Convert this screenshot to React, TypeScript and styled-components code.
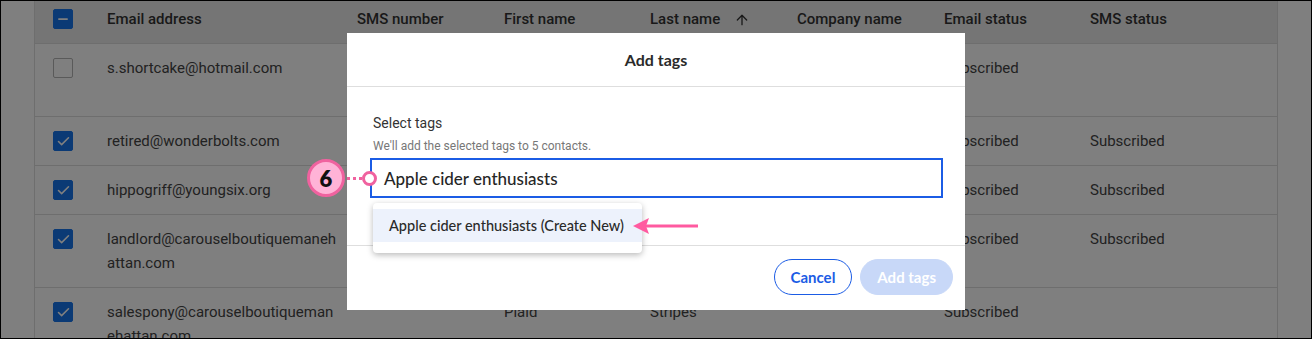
import React from 'react';
import styled, { createGlobalStyle } from 'styled-components';
import { ArrowUp, Check, Minus } from 'lucide-react';

const Global = createGlobalStyle`
  * {
    box-sizing: border-box;
  }
  body {
    margin: 0;
    background: #fff;
    overflow: hidden;
  }
`;

const Frame = styled.div`
  position: relative;
  width: 1312px;
  height: 339px;
  border: 1px solid #000;
  overflow: hidden;
  background: #fff;
  display: flex;
  font-family: Roboto, 'Liberation Sans', sans-serif;
`;

const Gutter = styled.div<{ $w?: number }>`
  flex: ${p => (p.$w ? `0 0 ${p.$w}px` : '1 1 auto')};
`;

const Table = styled.div`
  flex: 0 0 1244px;
  border-left: 1px solid #dcdcdc;
  border-right: 1px solid #dcdcdc;
`;

const Row = styled.div<{ $head?: boolean; $tall?: boolean }>`
  display: grid;
  grid-template-columns: 72px 250px 147px 146px 147px 147px 146px 1fr;
  border-bottom: 1px solid #dcdcdc;
  background: ${p => (p.$head ? '#ebebeb' : '#fff')};
  min-height: ${p => (p.$head ? 43 : p.$tall ? 73 : 49)}px;
  color: ${p => (p.$head ? '#333' : '#444')};
  font-size: 15px;
  font-weight: ${p => (p.$head ? 500 : 400)};
`;

const Cell = styled.div<{ $head?: boolean }>`
  padding: ${p => (p.$head ? '6px 0 12px' : '12px 0')};
  line-height: 24px;
  display: flex;
  align-items: flex-start;
  gap: 14px;
`;

const EmailCell = styled(Cell)`
  padding-right: 16px;
  word-break: break-all;
`;

const BoxCell = styled.div<{ $head?: boolean }>`
  padding: ${p => (p.$head ? '8px' : '14px')} 0 0 18px;
`;

const CheckBox = styled.div<{ $on?: boolean }>`
  width: 20px;
  height: 20px;
  border-radius: 2px;
  background: ${p => (p.$on ? '#1674ea' : '#fff')};
  border: 1px solid ${p => (p.$on ? '#1674ea' : '#b4b4b4')};
  display: flex;
  align-items: center;
  justify-content: center;
  color: #fff;
`;

const Overlay = styled.div`
  position: absolute;
  inset: 0;
  background: rgba(0, 0, 0, 0.5);
`;

const Modal = styled.div`
  position: absolute;
  left: 346px;
  top: 32px;
  width: 618px;
  height: 277px;
  background: #fff;
  display: flex;
  flex-direction: column;
`;

const ModalHead = styled.div`
  height: 54px;
  border-bottom: 1px solid #dedede;
  display: flex;
  align-items: center;
  justify-content: center;
  font-family: Lato, 'Open Sans', sans-serif;
  font-weight: 700;
  font-size: 16px;
  color: #2a2a2a;
`;

const ModalBody = styled.div`
  height: 159px;
  border-bottom: 1px solid #dedede;
  padding: 26px 22px 0 23px;
  position: relative;
`;

const Label = styled.div`
  padding-left: 3px;
  font-size: 14px;
  line-height: 20px;
  color: #333;
`;

const Helper = styled.div`
  padding-left: 3px;
  margin-top: 5px;
  font-size: 12px;
  line-height: 16px;
  color: #777;
`;

const Input = styled.div`
  margin-top: 4px;
  height: 40px;
  border: 2px solid #1b5ce5;
  display: flex;
  align-items: center;
  padding-left: 12px;
  font-family: Lato, 'Open Sans', sans-serif;
  font-size: 17px;
  font-weight: 500;
  color: #262626;
`;

const Menu = styled.div`
  position: absolute;
  left: 26px;
  top: 116px;
  width: 269px;
  padding: 6px 0 11px;
  background: #fff;
  border-radius: 4px;
  box-shadow: 0 2px 6px rgba(0, 0, 0, 0.28);
  z-index: 2;
`;

const MenuItem = styled.div<{ $active?: boolean }>`
  height: 33px;
  padding-left: 16px;
  display: flex;
  align-items: center;
  background: ${p => (p.$active ? '#edf2fc' : '#fff')};
  font-family: Lato, 'Open Sans', sans-serif;
  font-size: 14.5px;
  font-weight: 500;
  color: #2a2a2a;
`;

const Footer = styled.div`
  flex: 1;
  display: flex;
  justify-content: flex-end;
  align-items: center;
  gap: 8px;
  padding: 0 12px 2px 0;
`;

const Button = styled.div<{ $primary?: boolean }>`
  height: 36px;
  padding: 0 16px;
  border-radius: 18px;
  display: flex;
  align-items: center;
  font-family: Lato, 'Open Sans', sans-serif;
  font-weight: 700;
  font-size: 15px;
  color: ${p => (p.$primary ? '#fff' : '#1b5ce5')};
  background: ${p => (p.$primary ? '#c8d8f8' : '#fff')};
  border: 1px solid ${p => (p.$primary ? '#c8d8f8' : '#1b5ce5')};
`;

const Badge = styled.div`
  position: absolute;
  left: 306px;
  top: 158px;
  width: 38px;
  height: 38px;
  border-radius: 50%;
  background: #ffb3d7;
  border: 3px solid #f0629f;
  display: flex;
  align-items: center;
  justify-content: center;
  font-family: Lato, 'Open Sans', sans-serif;
  font-weight: 800;
  font-size: 22px;
  color: #111;
`;

const Dots = styled.div`
  position: absolute;
  left: 346px;
  top: 176px;
  width: 16px;
  height: 3px;
  background: repeating-linear-gradient(90deg, #f0629f 0 3px, transparent 3px 6px);
`;

const Ring = styled.div`
  position: absolute;
  left: 361px;
  top: 170px;
  width: 15px;
  height: 15px;
  border-radius: 50%;
  background: #fff;
  border: 3px solid #f0629f;
`;

const Pointer = styled.svg`
  position: absolute;
  left: 631px;
  top: 215px;
  z-index: 3;
`;

type Contact = {
  email: string;
  checked: boolean;
  first?: string;
  last?: string;
  emailStatus?: string;
  smsStatus?: string;
  tall?: boolean;
};

const contacts: Contact[] = [
  { email: 's.shortcake@hotmail.com', checked: false, emailStatus: 'Subscribed', tall: true },
  { email: 'retired@wonderbolts.com', checked: true, emailStatus: 'Subscribed', smsStatus: 'Subscribed' },
  { email: 'hippogriff@youngsix.org', checked: true, emailStatus: 'Subscribed', smsStatus: 'Subscribed' },
  { email: 'landlord@carouselboutiquemanehattan.com', checked: true, emailStatus: 'Subscribed', smsStatus: 'Subscribed' },
  { email: 'salespony@carouselboutiquemanehattan.com', checked: true, first: 'Plaid', last: 'Stripes', emailStatus: 'Subscribed' },
];

const columns = ['SMS number', 'First name', 'Last name', 'Company name', 'Email status', 'SMS status'];

export default function App() {
  return (
    <Frame>
      <Global />
      <Gutter $w={33} />
      <Table>
        <Row $head>
          <BoxCell $head>
            <CheckBox $on>
              <Minus size={14} strokeWidth={3} />
            </CheckBox>
          </BoxCell>
          <Cell $head>Email address</Cell>
          {columns.map(c => (
            <Cell $head key={c}>
              {c}
              {c === 'Last name' && <ArrowUp size={16} strokeWidth={2} style={{ marginTop: 5 }} />}
            </Cell>
          ))}
        </Row>
        {contacts.map(c => (
          <Row key={c.email} $tall={c.tall || c.email.length > 32}>
            <BoxCell>
              <CheckBox $on={c.checked}>{c.checked && <Check size={15} strokeWidth={2.5} />}</CheckBox>
            </BoxCell>
            <EmailCell>{c.email}</EmailCell>
            <Cell />
            <Cell>{c.first}</Cell>
            <Cell>{c.last}</Cell>
            <Cell />
            <Cell>{c.emailStatus}</Cell>
            <Cell>{c.smsStatus}</Cell>
          </Row>
        ))}
      </Table>
      <Gutter />
      <Overlay />
      <Modal>
        <ModalHead>Add tags</ModalHead>
        <ModalBody>
          <Label>Select tags</Label>
          <Helper>We'll add the selected tags to 5 contacts.</Helper>
          <Input>Apple cider enthusiasts</Input>
          <Menu>
            <MenuItem $active>Apple cider enthusiasts (Create New)</MenuItem>
          </Menu>
        </ModalBody>
        <Footer>
          <Button>Cancel</Button>
          <Button $primary>Add tags</Button>
        </Footer>
      </Modal>
      <Badge>6</Badge>
      <Dots />
      <Ring />
      <Pointer width="68" height="20" viewBox="0 0 68 20">
        <path d="M66 10 H14" stroke="#ff5aa0" strokeWidth="3" />
        <path d="M1 10 L17 2 L14 10 L17 18 Z" fill="#ff5aa0" />
      </Pointer>
    </Frame>
  );
}
